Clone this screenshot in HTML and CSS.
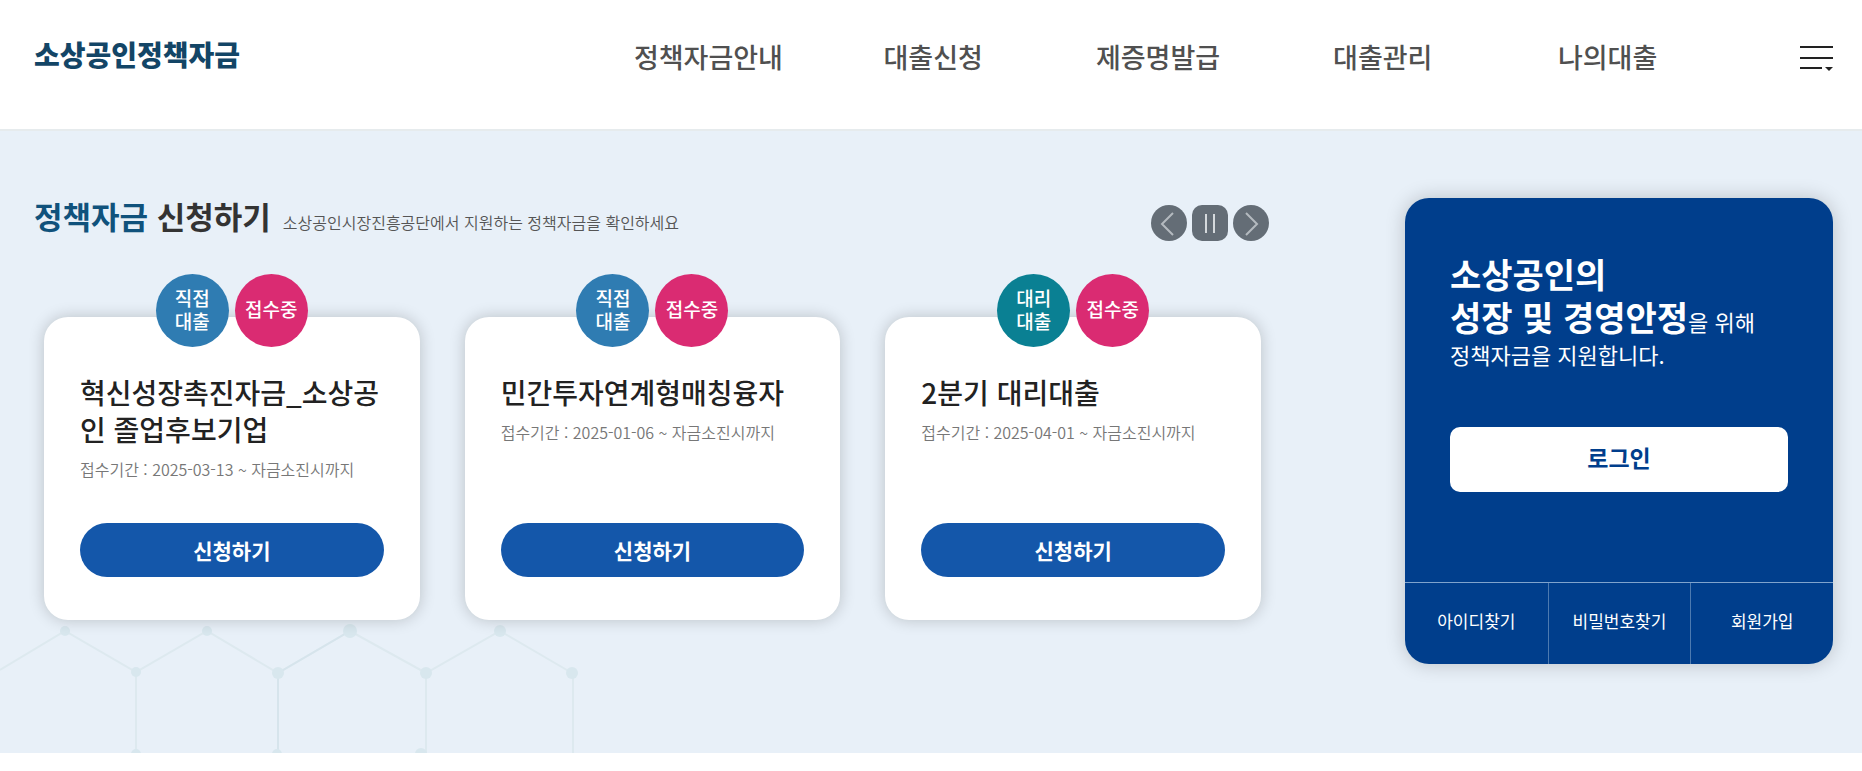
FILE: index.html
```html
<!DOCTYPE html>
<html lang="ko">
<head>
    <meta charset="UTF-8">
    <meta name="viewport" content="width=device-width, initial-scale=1.0">
    <title>소상공인정책자금</title>
    <link rel="stylesheet" href="styles.css">
</head>
<body>
    <header class="header">
        <a href="#" class="logo">소상공인정책자금</a>
        <nav>
            <ul class="nav-links">
                <li><a href="#">정책자금안내</a></li>
                <li><a href="#">대출신청</a></li>
                <li><a href="#">제증명발급</a></li>
                <li><a href="#">대출관리</a></li>
                <li><a href="#">나의대출</a></li>
            </ul>
        </nav>
        <button type="button" class="menu-btn" aria-label="전체메뉴">
            <svg width="33" height="26" viewBox="0 0 33 26">
                <path d="M0 3h33M0 14h33M0 24h22" fill="none" stroke="#222" stroke-width="2"/>
                <path d="M25 23h8l-4 4z" fill="#222"/>
            </svg>
        </button>
    </header>

    <main class="main">
        <!-- Hexagon pattern -->
        <svg class="pattern" width="600" height="130" viewBox="0 0 600 130" aria-hidden="true">
            <g fill="none" stroke="#dde9ef" stroke-width="2">
                <path d="M0 47L65 8l71 41 71-41 71 42 72-42 76 42 74-42 72 42"/>
                <path d="M136 49v81M278 50v80M426 50v80M573 50v80"/>
            </g>
            <path d="M278 50l72-42M278 50v80" fill="none" stroke="#d6e4ec" stroke-width="2"/>
            <g fill="#d8e7ee">
                <circle cx="65" cy="8" r="5"/>
                <circle cx="136" cy="49" r="5"/>
                <circle cx="207" cy="8" r="5"/>
                <circle cx="278" cy="50" r="6"/>
                <circle cx="350" cy="8" r="7"/>
                <circle cx="426" cy="50" r="6"/>
                <circle cx="500" cy="8" r="6"/>
                <circle cx="572" cy="50" r="6"/>
                <circle cx="136" cy="131" r="5"/>
                <circle cx="277" cy="131" r="5"/>
                <circle cx="421" cy="131" r="6"/>
            </g>
        </svg>

        <section class="fund">
            <div class="fund-head">
                <h2><em>정책자금</em> 신청하기</h2>
                <p>소상공인시장진흥공단에서 지원하는 정책자금을 확인하세요</p>
                <div class="controls">
                    <button type="button" aria-label="이전">
                        <svg width="36" height="36" viewBox="0 0 36 36"><path d="M22 8L11 19l11 11"/></svg>
                    </button>
                    <button type="button" class="pause" aria-label="정지">
                        <svg width="36" height="36" viewBox="0 0 36 36"><path d="M14 9v19M22 9v19"/></svg>
                    </button>
                    <button type="button" aria-label="다음">
                        <svg width="36" height="36" viewBox="0 0 36 36"><path d="M13 8l11 11-11 11"/></svg>
                    </button>
                </div>
            </div>

            <div class="cards">
                <article class="card">
                    <div class="badges">
                        <span class="badge direct">직접<br>대출</span>
                        <span class="badge open">접수중</span>
                    </div>
                    <h3>혁신성장촉진자금_소상공인 졸업후보기업</h3>
                    <p>접수기간 : 2025-03-13 ~ 자금소진시까지</p>
                    <button type="button" class="apply-btn">신청하기</button>
                </article>
                <article class="card">
                    <div class="badges">
                        <span class="badge direct">직접<br>대출</span>
                        <span class="badge open">접수중</span>
                    </div>
                    <h3>민간투자연계형매칭융자</h3>
                    <p>접수기간 : 2025-01-06 ~ 자금소진시까지</p>
                    <button type="button" class="apply-btn">신청하기</button>
                </article>
                <article class="card">
                    <div class="badges">
                        <span class="badge agency">대리<br>대출</span>
                        <span class="badge open">접수중</span>
                    </div>
                    <h3>2분기 대리대출</h3>
                    <p>접수기간 : 2025-04-01 ~ 자금소진시까지</p>
                    <button type="button" class="apply-btn">신청하기</button>
                </article>
            </div>
        </section>

        <aside class="login">
            <div class="login-body">
                <p class="login-text">
                    <strong>소상공인의<br>성장 및 경영안정</strong><span>을 위해</span>
                </p>
                <p class="login-sub">정책자금을 지원합니다.</p>
                <button type="button" class="login-btn">로그인</button>
            </div>
            <ul class="login-links">
                <li><a href="#">아이디찾기</a></li>
                <li><a href="#">비밀번호찾기</a></li>
                <li><a href="#">회원가입</a></li>
            </ul>
        </aside>
    </main>
</body>
</html>
```
FILE: styles.css
```css
* {
    box-sizing: border-box;
}

body {
    margin: 0;
    background-color: #fff;
    color: #222;
    font-family: "Noto Sans CJK KR", sans-serif;
    font-size: 16px;
}

h2, h3, p, ul {
    margin: 0;
    padding: 0;
}

ul {
    list-style: none;
}

a {
    color: inherit;
    text-decoration: none;
}

button {
    border: none;
    padding: 0;
    font-family: inherit;
    cursor: pointer;
}

svg {
    display: block;
}

/* Header */
.header {
    display: grid;
    grid-template-columns: 1fr 2fr 113px;
    align-items: center;
    padding: 36px 29px 51px 34px;
    border-bottom: 2px solid #e6ebed;
}

.logo {
    padding-bottom: 6px;
    font-size: 28px;
    font-weight: 900;
    line-height: 36px;
    color: #134566;
    white-space: nowrap;
}

.nav-links {
    display: grid;
    grid-template-columns: repeat(5, 1fr);
    text-align: center;
    font-size: 27px;
    font-weight: 500;
    line-height: 42px;
    color: #505050;
    white-space: nowrap;
}

.menu-btn {
    justify-self: end;
    background: none;
}

.menu-btn svg {
    overflow: visible;
}

/* Main */
.main {
    position: relative;
    display: flex;
    align-items: flex-start;
    gap: 136px;
    padding: 67px 29px 89px 34px;
    background-color: #e8f0f8;
}

.pattern {
    position: absolute;
    left: 0;
    bottom: 0;
}

.fund {
    position: relative;
    flex: 1;
}

.fund-head {
    display: flex;
    align-items: baseline;
    gap: 12px;
    min-height: 43px;
}

.fund-head h2 {
    font-size: 31px;
    line-height: 36px;
    color: #333;
}

.fund-head em {
    font-style: normal;
    color: #10527c;
}

.fund-head p {
    color: #555;
    font-weight: 350;
}

.controls {
    display: flex;
    align-self: flex-end;
    gap: 5px;
    margin-left: auto;
}

.controls button {
    width: 36px;
    height: 36px;
    border-radius: 50%;
    background-color: #646d76;
}

.controls .pause {
    border-radius: 10px;
}

.controls path {
    fill: none;
    stroke: #b4babf;
    stroke-width: 2;
}

.controls .pause path {
    stroke: #d5d9dc;
}

.cards {
    display: grid;
    grid-template-columns: repeat(3, 1fr);
    gap: 45px;
    padding: 76px 8px 0 10px;
}

.card {
    position: relative;
    display: flex;
    flex-direction: column;
    min-height: 303px;
    padding: 57px 36px 43px;
    border-radius: 24px;
    background-color: #fff;
    box-shadow: 0 0 16px rgba(0, 0, 0, 0.2);
}

.badges {
    position: absolute;
    top: -43px;
    left: 0;
    right: 0;
    display: flex;
    justify-content: center;
    gap: 6px;
}

.badge {
    display: flex;
    align-items: center;
    justify-content: center;
    width: 73px;
    height: 73px;
    padding-bottom: 4px;
    border-radius: 50%;
    color: #fff;
    font-size: 19px;
    font-weight: 500;
    line-height: 23px;
}

.direct {
    background-color: #2f7cb2;
}

.agency {
    background-color: #0a8093;
}

.open {
    background-color: #da2b72;
}

.card h3 {
    font-size: 28px;
    font-weight: 500;
    line-height: 37px;
    word-break: break-all;
}

.card p {
    margin: 9px 0 12px;
    color: #777;
    font-weight: 350;
    line-height: 24px;
}

.apply-btn {
    height: 54px;
    margin-top: auto;
    border-radius: 27px;
    background-color: #1457aa;
    color: #fff;
    font-size: 21px;
    font-weight: 700;
}

/* Login box */
.login {
    position: relative;
    width: 428px;
    border-radius: 24px;
    background-color: #003e8c;
    color: #fff;
    box-shadow: 0 0 20px rgba(0, 0, 0, 0.2);
}

.login-body {
    padding: 54px 45px 90px;
}

.login-text {
    font-size: 34px;
    line-height: 43px;
}

.login-text span {
    font-size: 22px;
    line-height: 22px;
}

.login-sub {
    font-size: 22px;
    line-height: 33px;
}

.login-btn {
    width: 100%;
    height: 65px;
    margin-top: 56px;
    padding-bottom: 6px;
    border-radius: 10px;
    background-color: #fff;
    color: #003e8c;
    font-size: 23px;
    font-weight: 700;
}

.login-links {
    display: grid;
    grid-template-columns: repeat(3, 1fr);
    border-top: 1px solid #7fa3cd;
    text-align: center;
    font-size: 17px;
    line-height: 75px;
}

.login-links li {
    padding-bottom: 6px;
}

.login-links li + li {
    border-left: 1px solid #4d7ab0;
}
```
